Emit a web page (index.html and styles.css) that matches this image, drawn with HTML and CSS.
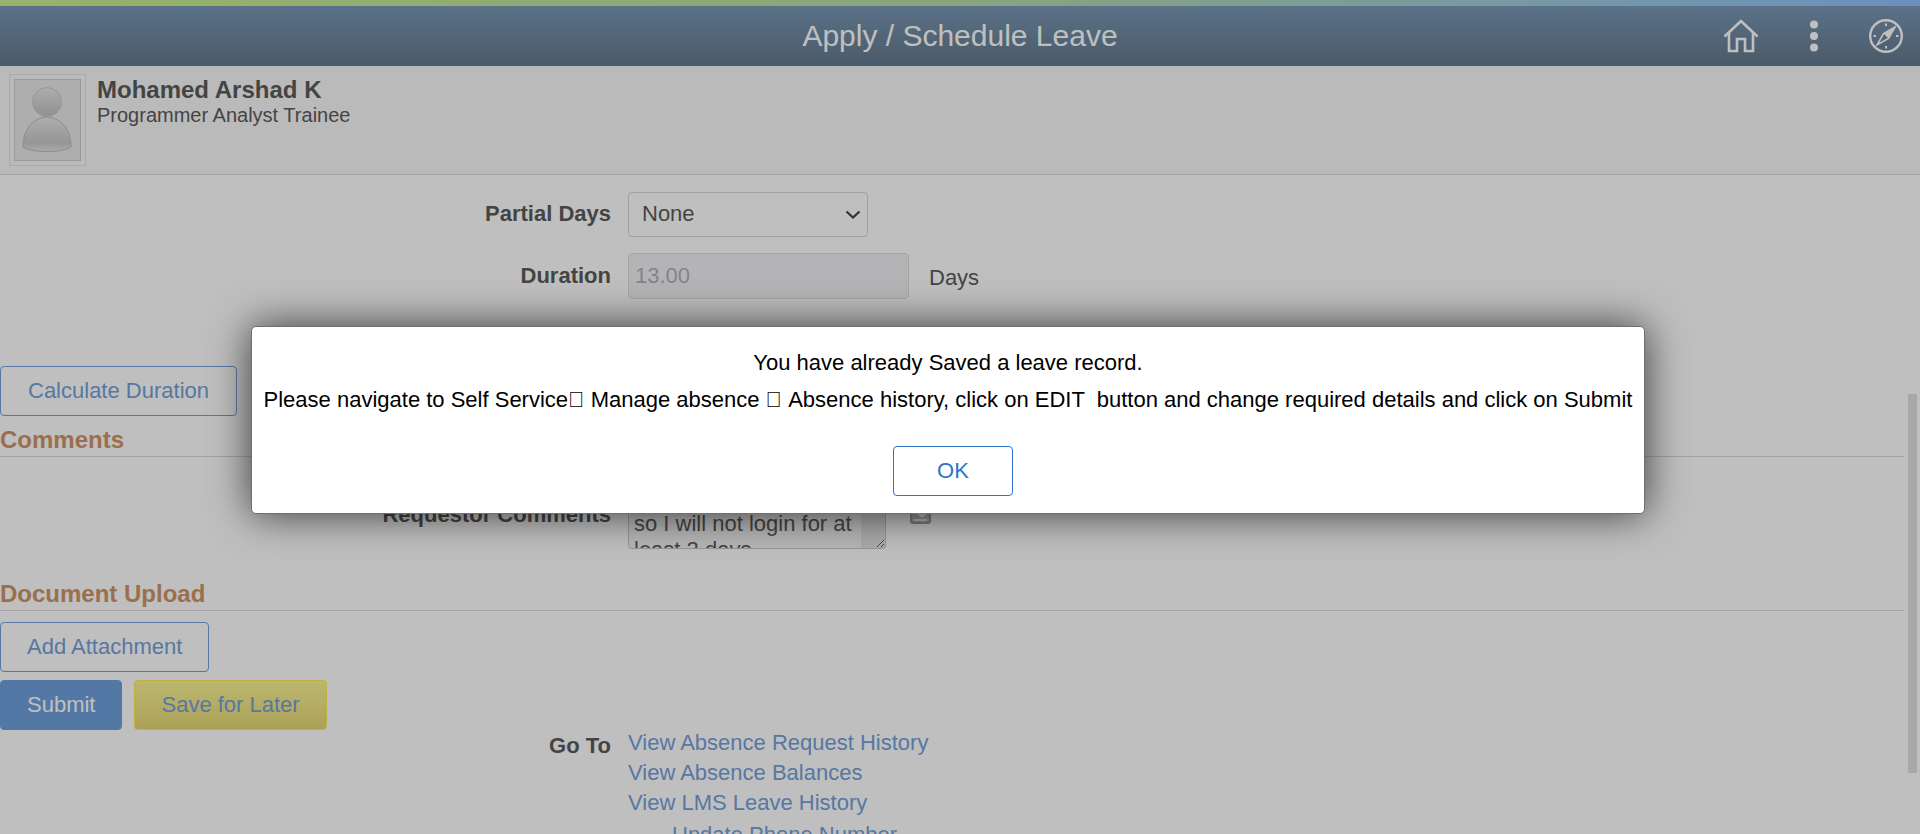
FILE: index.html
```html
<!DOCTYPE html>
<html>

<head>
    <title>Apply / Schedule Leave</title>
    <link rel="stylesheet" href="styles.css">
</head>

<body>
    <div class="top-stripe"></div>
    <header class="title-bar">
        <h1>Apply / Schedule Leave</h1>
        <nav class="title-icons">
            <svg class="icon-home" width="36" height="34" viewBox="0 0 36 34" fill="none" stroke="currentColor" stroke-width="2.6">
                <path d="M1.5 17.5 18 2 34.5 17.5" />
                <path d="M6 13.5V32H14V20H22V32H30V13.5" />
            </svg>
            <svg class="icon-dots" width="10" height="32" viewBox="0 0 10 32" fill="currentColor">
                <circle cx="5" cy="4.5" r="4" />
                <circle cx="5" cy="16" r="4" />
                <circle cx="5" cy="27.5" r="4" />
            </svg>
            <svg class="icon-compass" width="36" height="36" viewBox="0 0 36 36" fill="none" stroke="currentColor" stroke-width="2.4">
                <circle cx="18" cy="18" r="15.8" />
                <path d="M27 9 15.5 15.5 9 27 20.5 20.5Z" stroke-width="1.6" />
                <path d="M27 9 15.5 15.5 20.5 20.5Z" fill="currentColor" stroke="none" />
                <path d="M18 5.5V8M18 28V30.5M5.5 18H8M28 18H30.5" stroke-width="2" />
            </svg>
        </nav>
    </header>

    <section class="banner">
        <div class="photo">
            <div class="photo-inner">
                <svg width="64" height="80" viewBox="0 0 64 80">
                    <defs>
                        <linearGradient id="headShade" x1="0" y1="0" x2="0" y2="1">
                            <stop offset="0" stop-color="#e6e6e6" />
                            <stop offset="1" stop-color="#c2c2c2" />
                        </linearGradient>
                        <linearGradient id="bodyShade" x1="0" y1="0" x2="0" y2="1">
                            <stop offset="0" stop-color="#e8e8e8" />
                            <stop offset="0.75" stop-color="#c8c8c8" />
                            <stop offset="1" stop-color="#e4e4e4" />
                        </linearGradient>
                    </defs>
                    <circle cx="31" cy="22" r="14.5" fill="url(#headShade)" stroke="#cacaca" />
                    <path d="M7 67C7 50 16 38 31 37 46 38 55 50 55 67 47 73 15 73 7 67Z" fill="url(#bodyShade)" stroke="#bcbcbc" />
                </svg>
            </div>
        </div>
        <div class="person">
            <div class="person-name">Mohamed Arshad K</div>
            <div class="person-job">Programmer Analyst Trainee</div>
        </div>
    </section>

    <main class="content">
        <div class="form-row partial-row">
            <label class="field-label">Partial Days</label>
            <select class="field-select">
                <option>None</option>
            </select>
        </div>
        <div class="form-row duration-row">
            <label class="field-label">Duration</label>
            <input class="field-input" type="text" value="13.00" disabled>
            <span class="field-unit">Days</span>
        </div>

        <button class="btn calc-btn">Calculate Duration</button>

        <h2 class="section-head">Comments</h2>
        <div class="form-row comment-row">
            <label class="field-label">Requestor Comments</label>
            <textarea class="field-text" readonly>so I will not login for at
least 2 days</textarea>
            <svg class="expand-icon" width="21" height="19" viewBox="0 0 21 19">
                <rect x="1" y="1" width="19" height="17" rx="2" fill="#bcbcbc" stroke="#a0a0a0" stroke-width="2" />
                <path d="M7 9H17L12 13Z" fill="#f4f4f4" />
                <rect x="4" y="14" width="13" height="2" fill="#f0f0f0" />
            </svg>
        </div>

        <h2 class="section-head upload-head">Document Upload</h2>
        <button class="btn attach-btn">Add Attachment</button>
        <div class="action-row">
            <button class="btn btn-submit">Submit</button>
            <button class="btn btn-save">Save for Later</button>
        </div>

        <div class="form-row goto-row">
            <label class="field-label">Go To</label>
            <div class="goto-links">
                <a href="#">View Absence Request History</a>
                <a href="#">View Absence Balances</a>
                <a href="#">View LMS Leave History</a>
                <a class="sub-link" href="#">Update Phone Number</a>
            </div>
        </div>
    </main>

    <div class="scroll-thumb"></div>

    <div class="overlay"></div>
    <div class="dialog">
        <p>You have already Saved a leave record.</p>
        <p>Please navigate to Self Service&#xF0E0; Manage absence &#xF0E0; Absence history, click on EDIT &nbsp;button and change required details and click on Submit</p>
        <button class="dialog-ok">OK</button>
    </div>
</body>

</html>
```

FILE: styles.css
```css
* {
    box-sizing: border-box;
}

html,
body {
    height: 834px;
    overflow: hidden;
}

body {
    margin: 0;
    font-family: "Liberation Sans", Arial, sans-serif;
    font-size: 22px;
    color: #5b5b5b;
    background-color: #ffffff;
}

.top-stripe {
    height: 6px;
    background: linear-gradient(to right, #c8f08e, #b8dca8 50%, #8dc1ff);
}

.title-bar {
    display: flex;
    align-items: center;
    justify-content: center;
    position: relative;
    height: 60px;
    background: linear-gradient(to bottom, #7a98b6, #64788d);
    color: #ffffff;
}

.title-bar h1 {
    margin: 0;
    font-size: 30px;
    font-weight: normal;
}

.title-icons {
    position: absolute;
    top: 0;
    right: 0;
    bottom: 0;
    display: flex;
    align-items: center;
    padding-right: 16px;
}

.icon-home {
    margin-right: 50px;
}

.icon-dots {
    margin-right: 49px;
}

.banner {
    display: flex;
    height: 109px;
    padding: 8px 0 0 9px;
    background-color: #f9f9f9;
    border-bottom: 1px solid #dcdcdc;
}

.photo {
    width: 77px;
    height: 92px;
    padding: 4px;
    border: 1px solid #e1e6ea;
}

.photo-inner {
    display: flex;
    align-items: flex-end;
    justify-content: center;
    height: 100%;
    background-color: #e9e9e9;
    border: 1px solid #cdcdcd;
}

.person {
    padding: 3px 0 0 11px;
}

.person-name {
    font-size: 24px;
    font-weight: bold;
    line-height: 26px;
}

.person-job {
    font-size: 20px;
    line-height: 22px;
    margin-top: 1px;
}

.content {
    width: 1904px;
}

.form-row {
    display: flex;
}

.field-label {
    flex: none;
    width: 611px;
    margin-right: 17px;
    text-align: right;
    font-weight: bold;
}

.partial-row {
    margin-top: 17px;
    align-items: center;
    height: 45px;
}

.partial-row .field-label {
    margin-top: -2px;
}

.duration-row {
    margin-top: 16px;
    align-items: center;
    height: 46px;
}

.field-select {
    appearance: none;
    width: 240px;
    height: 45px;
    padding: 0 13px 2px;
    font-family: inherit;
    font-size: 22px;
    color: #5b5b5b;
    background-color: #ffffff;
    background-image: url("data:image/svg+xml,%3Csvg xmlns='http://www.w3.org/2000/svg' width='16' height='9'%3E%3Cpath d='M1.5 1.5 8 7.5 14.5 1.5' fill='none' stroke='%23444' stroke-width='2.2'/%3E%3C/svg%3E");
    background-repeat: no-repeat;
    background-position: right 6px center;
    border: 1px solid #d4d4d4;
    border-radius: 4px;
}

.field-input {
    width: 281px;
    height: 46px;
    padding: 0 6px;
    font-family: inherit;
    font-size: 22px;
    color: #b0b2b6;
    background-color: #f0f1f5;
    border: 1px solid #dcdcdc;
    border-radius: 4px;
}

.field-unit {
    margin-left: 20px;
    padding-top: 4px;
}

.btn {
    display: block;
    height: 50px;
    padding: 0 26px;
    font-family: inherit;
    font-size: 22px;
    color: #74a0d8;
    background-color: #ffffff;
    border: 1px solid #74a0d8;
    border-radius: 4px;
    cursor: pointer;
}

.calc-btn {
    margin-top: 67px;
    padding: 0 27px;
}

.section-head {
    height: 41px;
    margin: 0;
    padding-top: 11px;
    font-size: 24px;
    line-height: 26px;
    color: #cf9468;
    border-bottom: 1px solid #d8d8d8;
}

.comment-row {
    margin-top: 48px;
    height: 44px;
    align-items: flex-start;
}

.comment-row .field-label {
    line-height: 20px;
}

.field-text {
    width: 258px;
    height: 44px;
    padding: 5px 5px 0;
    font-family: inherit;
    font-size: 22px;
    line-height: 26px;
    color: #5b5b5b;
    background: linear-gradient(to right, #f5f5f5 calc(100% - 24px), #e4e4e4 0);
    border: 1px solid #c8c8c8;
    border-radius: 4px;
    overflow: hidden;
}

.expand-icon {
    margin-left: 24px;
}

.upload-head {
    margin-top: 21px;
}

.attach-btn {
    margin-top: 11px;
}

.action-row {
    display: flex;
    gap: 12px;
    margin-top: 8px;
}

.btn-submit {
    color: #ffffff;
    background-color: #6fa1dd;
    border-color: #6fa1dd;
}

.btn-save {
    background: linear-gradient(to bottom, #fcf494, #e4d875);
    border-color: #ffeb55;
}

.goto-row {
    margin-top: -2px;
}

.goto-row .field-label {
    padding-top: 3px;
    line-height: 30px;
}

.goto-links {
    display: flex;
    flex-direction: column;
}

.goto-links a {
    line-height: 30px;
    color: #74a0d8;
    text-decoration: none;
}

.goto-links .sub-link {
    margin: 2px 0 0 44px;
}

.scroll-thumb {
    position: absolute;
    top: 394px;
    left: 1908px;
    width: 9px;
    height: 379px;
    background-color: #e0e0e0;
}

.overlay {
    position: absolute;
    inset: 0;
    background-color: rgba(0, 0, 0, 0.25);
}

.dialog {
    position: absolute;
    top: 326px;
    left: 251px;
    width: 1394px;
    height: 188px;
    padding-top: 24px;
    text-align: center;
    color: #000000;
    background-color: #ffffff;
    border: 1px solid #707070;
    border-radius: 5px;
    box-shadow: 0 0 40px rgba(0, 0, 0, 0.7);
}

.dialog p {
    margin: 0 0 14px;
    line-height: 23px;
}

.dialog-ok {
    display: block;
    width: 120px;
    height: 50px;
    margin: 35px 0 0 641px;
    font-family: inherit;
    font-size: 22px;
    color: #2e74c6;
    background-color: #ffffff;
    border: 1px solid #2e74c6;
    border-radius: 4px;
}
```
